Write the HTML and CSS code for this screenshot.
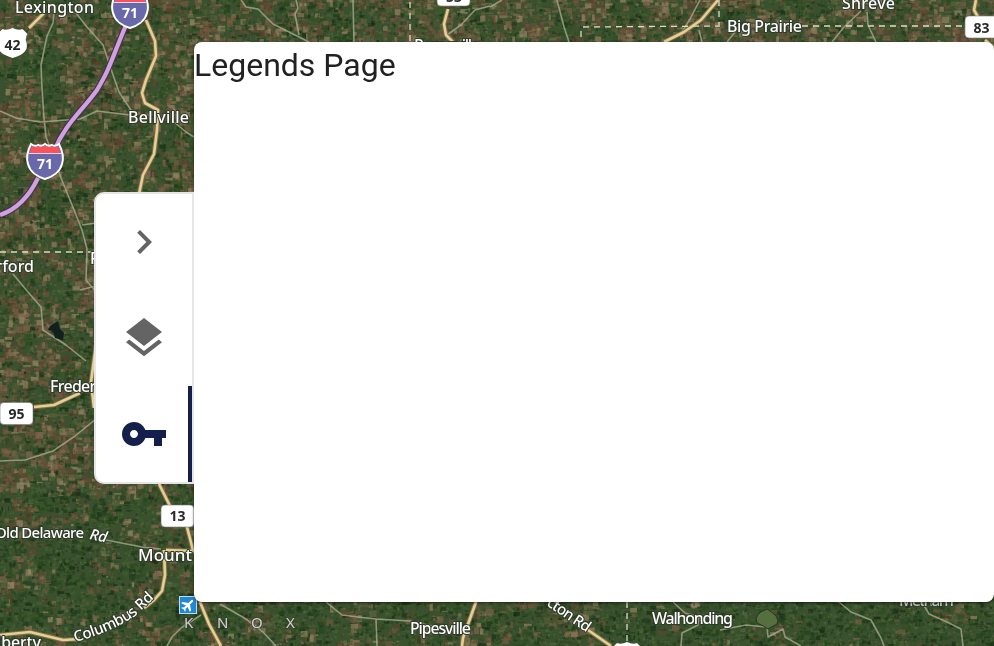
FILE: index.html
```html
<!DOCTYPE html>
<html lang="en">
<head>
<meta charset="utf-8">
<title>Legends Page</title>
<link rel="stylesheet" href="styles.css">
</head>
<body>
<main class="map-view">
  <canvas class="terrain" width="994" height="646"></canvas>
  <svg class="map-layer" viewBox="0 0 994 646" aria-hidden="true">
    <defs>
      <g id="interstate">
        <path d="M-14-17Q-10-14-7-16Q-3-14 0-17Q3-14 7-16Q10-14 14-17C18-9 19-3 17 3C15 11 7 16 0 18C-7 16-15 11-17 3C-19-3-18-9-14-17Z" fill="#6868aa" stroke="#fff" stroke-width="2"/>
        <path d="M-13-15Q-10-12.500-7-15Q-3-12.500 0-16Q3-12.500 7-15Q10-12.500 13-15L15.500-8H-15.500Z" fill="#fb5158"/>
        <path d="M-16-7.500H16" stroke="#dddcf0" stroke-width="1"/>
      </g>
      <path id="us-route" d="M-10-14Q-6-12 0-15Q6-12 10-14L15-9Q12-5 14 0C16 8 10 12 0 15C-10 12-16 8-14 0Q-12-5-15-9Z" fill="#fff"/>
    </defs>
    <g class="minor-road">
      <path d="M54 13L53 23L47 36L41 65L42 88L44 118L46 137L52 153L61 178L70 200L82 230L87 249L86 280L96 292"/>
      <path d="M76 13L87 27L103 45L112 72L119 92L131 110"/>
      <path d="M0 111L16 118L40 122L80 119L97 111L130 115M174 122L186 132L194 137"/>
      <path d="M13 274L28 292L41 307L43 330L66 345L86 361"/>
      <path d="M82 225L96 223M80 290L96 286M0 461L25 460L53 451L75 436L96 419"/>
      <path d="M106 540L142 547L161 549"/>
      <path d="M241 0L246 7L258 9L273 24L293 34L309 42M296 0L298 8L295 14L299 35M353 0L354 42M490 7L502 0M557 0L564 27L569 42M447 35L461 25L475 10L490 6"/>
      <path d="M700 0L690 19L680 35M699 30L702 42M861 11L844 27L832 42M867 12L868 25L876 42M735 32L727 42"/>
      <path d="M220 604L246 619L263 632L276 646M326 602L342 615L358 617L376 619L410 621L458 632M376 619L377 646M167 646L172 637L181 628L201 615"/>
      <path d="M839 602L851 612L871 620L881 638L884 646M922 602L929 614L947 622L961 629L963 646M720 630L746 625L767 627L768 637L783 629L785 637L801 646M673 602L685 613L699 617L698 625L682 633L681 646"/>
    </g>
    <g class="road-case">
      <path id="main-routes" d="M146 20L155 41L156 56L146 80L142 93L145 103L158 110L157 130L154 154L143 175L139 194M44 13L29 28M96 345L91 382L94 408M34 407L54 405L80 393M159 484L170 506M187 527L193 550M164 550L165 575L162 591L154 600L144 608M0 635L30 632L63 640L80 639M448 9L444 24L446 35L453 42M718 0L701 20L684 32L664 42M200 602L209 624L221 646M476 602L463 638L462 646M588 630L611 646M976 0L974 10L978 17M985 40L994 48M166 550L194 551"/>
    </g>
    <use class="main-road" href="#main-routes"/>
    <path class="freeway-case" d="M126 25C109 66 110 68 97 90C82 111 65 124 54 151M38 178Q24 207 0 215"/>
    <path class="freeway" d="M126 25C109 66 110 68 97 90C82 111 65 124 54 151M38 178Q24 207 0 215"/>
    <path class="boundary" d="M0 252H94M410 2V42M583 27L720 26M719 0V25M802 26L963 26M627 602V642M581 31V38"/>
    <path d="M757 623Q753 614 767 609Q781 617 777 624L768 629Q764 626 757 623Z" fill="#566f3e" stroke="#26331e"/>
    <path d="M50 326L58 321L60 329L64 333L63 340L55 338L53 331L48 330Z" fill="#111f1d"/>
    <g>
      <use href="#interstate" x="130" y="10"/><text class="shield-num" x="130" y="18">71</text>
      <use href="#interstate" x="45" y="161"/><text class="shield-num" x="45" y="169">71</text>
    </g>
    <use href="#us-route" x="12.500" y="43"/>
    <use href="#us-route" x="627" y="657"/>
    <g class="route-box">
      <rect x="0" y="402.500" width="33" height="22" rx="4"/>
      <rect x="161" y="505" width="33" height="22" rx="4"/>
      <rect x="437" y="-16" width="33" height="22" rx="4"/>
      <rect x="965" y="16" width="33" height="22" rx="4"/>
    </g>
    <g class="route-num">
      <text x="12.500" y="50">42</text><text x="16.500" y="419">95</text><text x="177.500" y="521">13</text><text x="454" y="2">53</text><text x="981.500" y="33">83</text>
    </g>
    <g class="place">
      <text x="15" y="13" textLength="79">Lexington</text>
      <text x="128" y="123" textLength="61">Bellville</text>
      <text x="34" y="272" text-anchor="end">Butterford</text>
      <text x="90" y="264">P</text>
      <text x="50" y="392" textLength="101">Fredericktown</text>
      <text x="727" y="32" textLength="75">Big Prairie</text>
      <text x="842" y="9" textLength="53">Shreve</text>
      <text x="414" y="51" textLength="66">Perrysville</text>
      <text x="138" y="561" class="large" textLength="54">Mount</text>
      <text x="-3" y="648" textLength="44">iberty</text>
      <text x="410" y="634" textLength="61">Pipesville</text>
      <text x="652" y="624" textLength="81">Walhonding</text>
      <text x="899" y="606" textLength="55" class="dim">Metham</text>
      <text x="-5" y="538" textLength="89" class="road">Old Delaware</text>
      <text x="89" y="539" transform="rotate(12 89 539)" class="italic">Rd</text>
      <path id="columbus-line" d="M75 642Q112 632 135 616L165 588" fill="none" stroke="none"/>
      <text class="road"><textPath href="#columbus-line" textLength="92">Columbus Rd</textPath></text>
      <text x="546" y="605" transform="rotate(34 546 605)" textLength="49" class="road">cton Rd</text>
    </g>
    <g class="county"><text x="184" y="628">K</text><text x="217" y="628">N</text><text x="251" y="628">O</text><text x="286" y="628">X</text></g>
    <rect x="179.500" y="596.500" width="17" height="17" fill="#2388d4" stroke="#b8def4"/>
    <path d="M-1.200-7Q0-9 1.200-7V-2L7 2V4L1.200 2V5L3 7V8L0 7L-3 8V7L-1.200 5V2L-7 4V2L-1.200-2Z" transform="translate(188 605) rotate(45) scale(.88)" fill="#fff"/>
  </svg>
  <section class="drawer">
    <nav class="tabs" aria-label="Map panels">
      <button class="tab" aria-label="Collapse"><svg viewBox="0 0 24 24"><path d="M10 6L8.590 7.410 13.170 12l-4.580 4.590L10 18l6-6z"/></svg></button>
      <button class="tab" aria-label="Layers"><svg viewBox="0 0 24 24"><path d="M11.990 18.540l-7.370-5.730L3 14.070l9 7 9-7-1.630-1.270-7.380 5.740zM12 16l7.360-5.730L21 9l-9-7-9 7 1.630 1.270L12 16z"/></svg></button>
      <button class="tab selected" aria-label="Legends"><svg viewBox="0 0 24 24"><path d="M12.650 10C11.830 7.670 9.610 6 7 6c-3.310 0-6 2.690-6 6s2.690 6 6 6c2.610 0 4.830-1.670 5.650-4H17v4h4v-4h2v-4H12.650zM7 14c-1.100 0-2-.9-2-2s.9-2 2-2 2 .9 2 2-.9 2-2 2z"/></svg></button>
    </nav>
    <article class="panel"><h1>Legends Page</h1></article>
  </section>
</main>
<script src="terrain.js"></script>
</body>
</html>
```
FILE: styles.css
```css
* { box-sizing: border-box; }
body { margin: 0; overflow: hidden; font-family: Roboto, sans-serif; }
.map-view { position: relative; width: 994px; height: 646px; overflow: hidden; background: #34492a; }
.terrain, .map-layer { position: absolute; inset: 0; width: 994px; height: 646px; }
.minor-road { fill: none; stroke: #a5aa8c; stroke-width: 1.6; stroke-linejoin: round; opacity: .8; }
.road-case { fill: none; stroke: #826f45; stroke-width: 4.6; stroke-linejoin: round; }
.main-road { fill: none; stroke: #e5ce98; stroke-width: 2.6; stroke-linejoin: round; }
.freeway-case { fill: none; stroke: #4c304f; stroke-width: 6.5; }
.freeway { fill: none; stroke: #cda2df; stroke-width: 4.2; }
.boundary { fill: none; stroke: #d8dfc4; stroke-width: 1.3; stroke-dasharray: 6 5; }
.shield-num, .route-num { font: 700 14px "Noto Sans", sans-serif; text-anchor: middle; }
.shield-num { fill: #fff; }
.route-num { fill: #292929; }
.route-box { fill: #fff; stroke: #777; stroke-width: .6; }
.place { font: 500 16px "Noto Sans", sans-serif; fill: #fff; stroke: #303a2a; stroke-width: 2px; stroke-linejoin: round; paint-order: stroke; }
.place .road { font-size: 15px; }
.place .large { font-size: 17px; }
.place .italic { font-size: 15px; font-style: italic; }
.place .dim { fill: #c8cdc3; }
.county { font: 15px "Noto Sans", sans-serif; fill: #d3d3cf; stroke: #3b4034; stroke-width: 1.5px; paint-order: stroke; }
.drawer { position: relative; display: flex; align-items: flex-start; padding: 42px 0 0 94px; }
.tabs { position: relative; z-index: 1; width: 100px; height: 292px; margin-top: 150px; display: flex; flex-direction: column; background: #fff; border: 2px solid #e5e5e5; border-radius: 10px 0 0 10px; }
.tab { height: 96px; padding: 0; border: 0; background: transparent; display: flex; align-items: center; justify-content: center; color: #646464; }
.tab svg { display: block; width: 48px; height: 48px; fill: currentColor; }
.tab.selected { color: #141f4c; box-shadow: inset -4px 0 #141f4c; }
.panel { width: 800px; height: 560px; background: #fff; border-radius: 8px; box-shadow: 0 1px 3px #0008; }
.panel h1 { margin: 2px 0 0; font-size: 32px; font-weight: 400; line-height: 42px; color: #212121; }
```
FILE: terrain.js
```js
const ctx = document.querySelector('.terrain').getContext('2d');
let seed = 71839;
const rnd = () => {
  seed = (Math.imul(seed, 1664525) + 1013904223) >>> 0;
  return seed / 4294967296;
};
const hash = (x, y) => {
  let n = Math.imul(x, 374761393) + Math.imul(y, 668265263);
  n = Math.imul(n ^ (n >>> 13), 1274126177);
  return ((n ^ (n >>> 16)) >>> 0) / 4294967296;
};
const noise = (x, y) => {
  const a = Math.floor(x), b = Math.floor(y);
  const u = x - a, v = y - b;
  const top = hash(a, b) * (1 - u) + hash(a + 1, b) * u;
  const low = hash(a, b + 1) * (1 - u) + hash(a + 1, b + 1) * u;
  return top * (1 - v) + low * v;
};
const woods = [[38, 67, 31], [43, 77, 34], [58, 87, 42], [30, 53, 27], [70, 92, 51]];
const fields = [[110, 87, 63], [94, 79, 54], [121, 95, 70], [84, 91, 55], [98, 73, 53], [143, 125, 94]];
ctx.fillStyle = '#3a502e';
ctx.fillRect(0, 0, 994, 646);
// Patchwork of farmland and woodland
for (let i = 0; i < 47000; i++) {
  const x = rnd() * 1000 - 4, y = rnd() * 650 - 4;
  let threshold = .47;
  if (y > 490) threshold = x > 600 ? .74 : .62;
  const field = noise(x / 14, y / 14) * .6 + rnd() * .4 > threshold;
  const colors = field ? fields : woods;
  const base = colors[Math.floor(rnd() * colors.length)];
  const shade = (rnd() - .5) * 22;
  ctx.fillStyle = `rgba(${base.map(c => Math.round(c + shade)).join(',')},.7)`;
  const wide = field ? 2 + rnd() * 6 : 1 + rnd() * 6;
  ctx.fillRect(x, y, wide, 1 + rnd() * (field ? 6 : 4));
}
// Fine grain and occasional pale clearings
for (let i = 0; i < 22000; i++) {
  ctx.fillStyle = rnd() > .5 ? 'rgba(165,160,115,.16)' : 'rgba(10,28,13,.22)';
  ctx.fillRect(rnd() * 994, rnd() * 646, 1 + rnd() * 2, 1 + rnd() * 2);
}
```
